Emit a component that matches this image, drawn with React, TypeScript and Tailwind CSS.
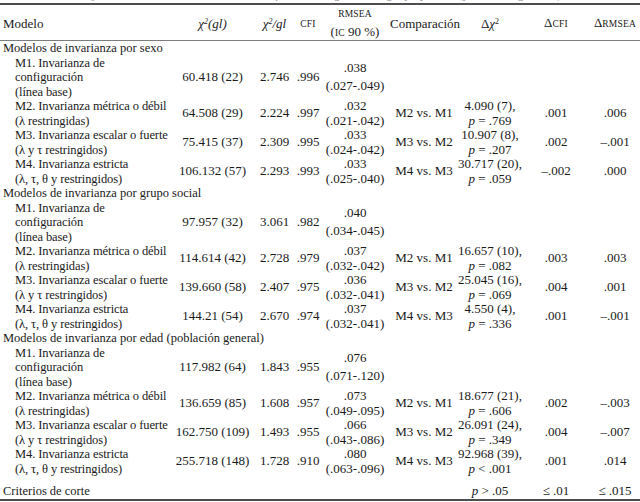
type Row = {
  model: string[];
  chi: string;
  ratio: string;
  cfi: string;
  rmsea: [string, string];
  comp?: string;
  delta?: [string, string];
  dcfi?: string;
  drmsea?: string;
};

type Group = { title: string; rows: Row[] };

const M1 = ["M1. Invarianza de", "configuración", "(línea base)"];
const M2 = ["M2. Invarianza métrica o débil", "(λ restringidas)"];
const M3 = ["M3. Invarianza escalar o fuerte", "(λ y τ restringidos)"];
const M4 = ["M4. Invarianza estricta", "(λ, τ, θ y restringidos)"];

const GROUPS: Group[] = [
  {
    title: "Modelos de invarianza por sexo",
    rows: [
      { model: M1, chi: "60.418 (22)", ratio: "2.746", cfi: ".996", rmsea: [".038", "(.027-.049)"] },
      { model: M2, chi: "64.508 (29)", ratio: "2.224", cfi: ".997", rmsea: [".032", "(.021-.042)"], comp: "M2 vs. M1", delta: ["4.090 (7),", "= .769"], dcfi: ".001", drmsea: ".006" },
      { model: M3, chi: "75.415 (37)", ratio: "2.309", cfi: ".995", rmsea: [".033", "(.024-.042)"], comp: "M3 vs. M2", delta: ["10.907 (8),", "= .207"], dcfi: ".002", drmsea: "–.001" },
      { model: M4, chi: "106.132 (57)", ratio: "2.293", cfi: ".993", rmsea: [".033", "(.025-.040)"], comp: "M4 vs. M3", delta: ["30.717 (20),", "= .059"], dcfi: "–.002", drmsea: ".000" },
    ],
  },
  {
    title: "Modelos de invarianza por grupo social",
    rows: [
      { model: M1, chi: "97.957 (32)", ratio: "3.061", cfi: ".982", rmsea: [".040", "(.034-.045)"] },
      { model: M2, chi: "114.614 (42)", ratio: "2.728", cfi: ".979", rmsea: [".037", "(.032-.042)"], comp: "M2 vs. M1", delta: ["16.657 (10),", "= .082"], dcfi: ".003", drmsea: ".003" },
      { model: M3, chi: "139.660 (58)", ratio: "2.407", cfi: ".975", rmsea: [".036", "(.032-.041)"], comp: "M3 vs. M2", delta: ["25.045 (16),", "= .069"], dcfi: ".004", drmsea: ".001" },
      { model: M4, chi: "144.21 (54)", ratio: "2.670", cfi: ".974", rmsea: [".037", "(.032-.041)"], comp: "M4 vs. M3", delta: ["4.550 (4),", "= .336"], dcfi: ".001", drmsea: "–.001" },
    ],
  },
  {
    title: "Modelos de invarianza por edad (población general)",
    rows: [
      { model: M1, chi: "117.982 (64)", ratio: "1.843", cfi: ".955", rmsea: [".076", "(.071-.120)"] },
      { model: M2, chi: "136.659 (85)", ratio: "1.608", cfi: ".957", rmsea: [".073", "(.049-.095)"], comp: "M2 vs. M1", delta: ["18.677 (21),", "= .606"], dcfi: ".002", drmsea: "–.003" },
      { model: M3, chi: "162.750 (109)", ratio: "1.493", cfi: ".955", rmsea: [".066", "(.043-.086)"], comp: "M3 vs. M2", delta: ["26.091 (24),", "= .349"], dcfi: ".004", drmsea: "–.007" },
      { model: M4, chi: "255.718 (148)", ratio: "1.728", cfi: ".910", rmsea: [".080", "(.063-.096)"], comp: "M4 vs. M3", delta: ["92.968 (39),", "< .001"], dcfi: ".001", drmsea: ".014" },
    ],
  },
];

function Sc({ children }: { children: string }) {
  // small caps as in the printed table
  return <span className="text-[9.5px] tracking-[0.2px]">{children}</span>;
}

function ModelRow({ row }: { row: Row }) {
  const tall = row.model.length === 3;
  return (
    <tr>
      <td className="pl-[15px] align-middle whitespace-nowrap text-[12.5px] tracking-[-0.1px]">
        {row.model.map((line) => (
          <div key={line}>{line}</div>
        ))}
      </td>
      <td className="text-center align-middle whitespace-nowrap">{row.chi}</td>
      <td className="text-center align-middle">{row.ratio}</td>
      <td className="text-center align-middle">{row.cfi}</td>
      <td className="text-center align-middle">
        <div className={`flex flex-col items-center ${tall ? "gap-[3px]" : "gap-0"}`}>
          <span>{row.rmsea[0]}</span>
          <span>{row.rmsea[1]}</span>
        </div>
      </td>
      <td className="text-center align-middle whitespace-nowrap">{row.comp}</td>
      <td className="text-center align-middle whitespace-nowrap">
        {row.delta && (
          <>
            <div>{row.delta[0]}</div>
            <div>
              <i>p</i> {row.delta[1]}
            </div>
          </>
        )}
      </td>
      <td className="text-center align-middle">{row.dcfi}</td>
      <td className="text-center align-middle">{row.drmsea}</td>
    </tr>
  );
}

export default function App() {
  return (
    <div className="w-[640px] h-[502px] overflow-hidden bg-white font-['Liberation_Serif','Times_New_Roman',serif] text-[13px] leading-[14.5px] text-[#1a1a1a]">
      <div className="h-[3px] overflow-hidden">
        <p className="-mt-[13px] pl-[40px] italic text-[#9a9a9a] whitespace-nowrap">
          Tabla 4. Ajuste de los modelos de invarianza factorial según sexo, grupo y edad (población general)
        </p>
      </div>
      <table className="w-full table-fixed border-collapse border-t-2 border-b-2 border-[#4d4d4d]">
        <colgroup>
          <col className="w-[172px]" />
          <col className="w-[81px]" />
          <col className="w-[43px]" />
          <col className="w-[24px]" />
          <col className="w-[70px]" />
          <col className="w-[68px]" />
          <col className="w-[64px]" />
          <col className="w-[68px]" />
          <col className="w-[50px]" />
        </colgroup>
        <thead>
          <tr className="h-[33px] border-b border-[#7d7d7d]">
            <th className="pl-[3px] pt-[3px] text-left font-normal align-middle">Modelo</th>
            <th className="pt-[3px] text-center font-normal align-middle italic">
              χ<sup className="text-[8px]">2</sup>(gl)
            </th>
            <th className="pt-[3px] text-center font-normal align-middle italic">
              χ<sup className="text-[8px]">2</sup>/gl
            </th>
            <th className="pt-[3px] text-center font-normal align-middle">
              <Sc>CFI</Sc>
            </th>
            <th className="text-center font-normal align-middle">
              <div className="flex flex-col items-center gap-[3px] pt-[2px]">
                <Sc>RMSEA</Sc>
                <span>
                  (<Sc>IC</Sc> 90 %)
                </span>
              </div>
            </th>
            <th className="pt-[3px] text-center font-normal align-middle">Comparación</th>
            <th className="pt-[3px] text-center font-normal align-middle">
              Δ<i>χ</i>
              <sup className="text-[8px]">2</sup>
            </th>
            <th className="pt-[3px] text-center font-normal align-middle">
              Δ<Sc>CFI</Sc>
            </th>
            <th className="pt-[3px] text-center font-normal align-middle">
              Δ<Sc>RMSEA</Sc>
            </th>
          </tr>
        </thead>
        <tbody>
          {GROUPS.map((g) => (
            <>
              <tr key={g.title}>
                <td colSpan={9} className="pl-[3px] whitespace-nowrap text-[12.5px]">
                  {g.title}
                </td>
              </tr>
              {g.rows.map((r) => (
                <ModelRow key={g.title + r.model[0]} row={r} />
              ))}
            </>
          ))}
          <tr>
            <td className="pl-[3px] pt-[8px] whitespace-nowrap text-[12.5px]">Criterios de corte</td>
            <td />
            <td />
            <td />
            <td />
            <td />
            <td className="pt-[8px] text-center">
              <i>p</i> &gt; .05
            </td>
            <td className="pt-[8px] text-center">≤ .01</td>
            <td className="pt-[8px] text-center">≤ .015</td>
          </tr>
        </tbody>
      </table>
    </div>
  );
}
